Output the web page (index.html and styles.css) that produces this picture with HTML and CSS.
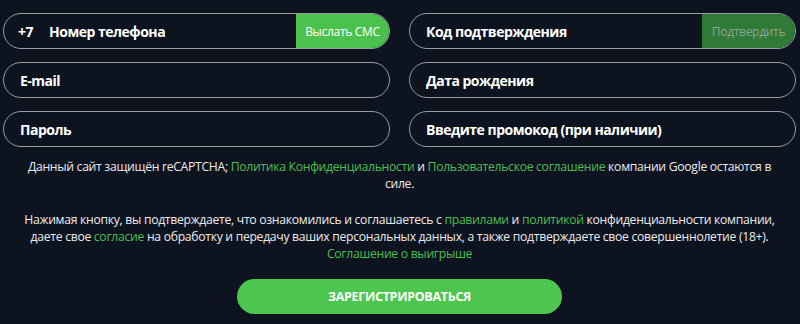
FILE: index.html
```html
<!DOCTYPE html>
<html lang="ru">
<head>
    <meta charset="UTF-8">
    <meta name="viewport" content="width=device-width, initial-scale=1.0">
    <title>Регистрация</title>
    <link rel="stylesheet" href="styles.css">
</head>
<body>

    <form class="reg-form" action="#" method="POST">
        <div class="fields">
            <!-- Телефон -->
            <div class="field">
                <span class="prefix">+7</span>
                <input type="tel" name="phone" placeholder="Номер телефона">
                <button type="button" class="field-btn">Выслать СМС</button>
            </div>

            <div class="field">
                <input type="text" name="code" placeholder="Код подтверждения">
                <button type="button" class="field-btn disabled">Подтвердить</button>
            </div>

            <div class="field">
                <input type="email" name="email" placeholder="E-mail">
            </div>

            <div class="field">
                <input type="text" name="birth" placeholder="Дата рождения">
            </div>

            <div class="field">
                <input type="password" name="password" placeholder="Пароль">
            </div>

            <div class="field">
                <input type="text" name="promo" placeholder="Введите промокод (при наличии)">
            </div>
        </div>

        <p class="note">Данный сайт защищён reCAPTCHA; <a href="#">Политика Конфиденциальности</a> и <a href="#">Пользовательское соглашение</a> компании Google остаются в силе.</p>

        <p class="note">Нажимая кнопку, вы подтверждаете, что ознакомились и соглашаетесь с <a href="#">правилами</a> и <a href="#">политикой</a> конфиденциальности компании, даете свое <a href="#">согласие</a> на обработку и передачу ваших персональных данных, а также подтверждаете свое совершеннолетие (18+).<br><a href="#">Соглашение о выигрыше</a></p>

        <button type="submit" class="submit">ЗАРЕГИСТРИРОВАТЬСЯ</button>
    </form>

</body>
</html>
```

FILE: styles.css
```css
/* Общие стили */
body {
    margin: 0;
    background-color: #0e1320;
    color: #ececec;
    font-family: "Open Sans", Arial, sans-serif;
}

.reg-form {
    padding: 13px 4px 0 3px;
    display: flex;
    flex-direction: column;
    align-items: center;
}

.fields {
    width: 100%;
    display: grid;
    grid-template-columns: 1fr 1fr;
    column-gap: 19px;
    row-gap: 13px;
}

.field {
    height: 36px;
    box-sizing: border-box;
    border: 1.5px solid #9a9ca2;
    border-radius: 18px;
    display: flex;
    align-items: center;
    overflow: hidden;
    padding-left: 16px;
}

.prefix {
    font-size: 14px;
    font-weight: 700;
    letter-spacing: -0.5px;
    color: #fff;
    margin-left: -2px;
    margin-right: 16px;
}

.field input {
    flex: 1;
    min-width: 0;
    height: 100%;
    background: transparent;
    border: none;
    outline: none;
    padding: 0;
    color: #fff;
    font-family: inherit;
    font-size: 14px;
    font-weight: 700;
    letter-spacing: -0.5px;
}

.field input::placeholder {
    color: #fff;
    opacity: 1;
}

.field-btn {
    height: 100%;
    width: 93px;
    border: none;
    background-color: #4cc24e;
    color: #fff;
    font-family: inherit;
    font-size: 12px;
    letter-spacing: -0.3px;
    padding: 0;
    cursor: pointer;
}

.field-btn.disabled {
    background-color: #2f7a37;
    color: #8fa391;
}

.note {
    margin: 11px 0 0;
    padding: 0 14px;
    text-align: center;
    font-size: 12.2px;
    letter-spacing: -0.3px;
    line-height: 17px;
}

.note + .note {
    margin-top: 19px;
}

.note a {
    color: #4cbf50;
    text-decoration: none;
}

.submit {
    margin-top: 17px;
    width: 325px;
    height: 35px;
    border: none;
    border-radius: 18px;
    background-color: #4cc64e;
    color: #fff;
    font-family: inherit;
    font-size: 12.5px;
    font-weight: 700;
    letter-spacing: -0.3px;
    cursor: pointer;
}
```
